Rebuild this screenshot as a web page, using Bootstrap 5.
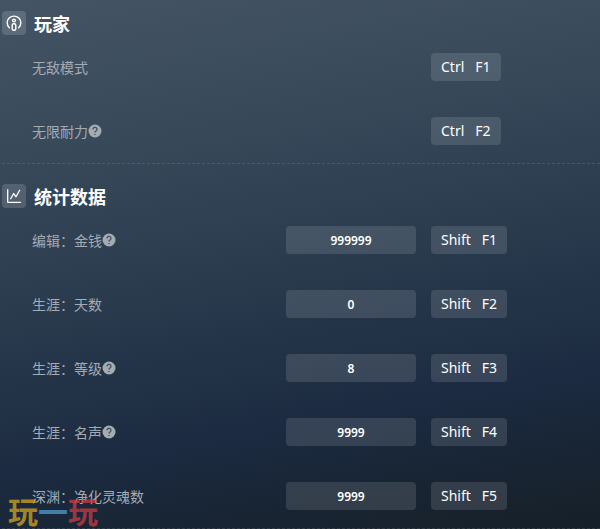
<!DOCTYPE html>
<html lang="zh-CN">
<head>
<meta charset="utf-8">
<meta name="viewport" content="width=device-width, initial-scale=1">
<title>玩家</title>
<link href="https://cdn.jsdelivr.net/npm/bootstrap@5.3.0/dist/css/bootstrap.min.css" rel="stylesheet">
<style>
html { min-height: 100%; background: linear-gradient(170deg, #445465 0%, #38495a 25%, #2a3b4e 50%, #1b2a40 76%, #17222d 94%, #151f28 100%); }
body { background: transparent; color: #fff; font-family: "Noto Sans", "Noto Sans CJK SC", sans-serif; overflow: hidden; }
.options { margin-left: 2px; padding-top: 20px; border-bottom: 1px dashed rgba(255,255,255,.12); }
.options:first-child { padding-top: 11px; }
.section-icon { width: 24px; height: 24px; border-radius: 4px; background: rgba(255,255,255,.15); }
.section-title { font: 700 18px/24px "Noto Sans CJK SC", sans-serif; }
.option { height: 64px; padding-left: 30px; }
.option-name { width: 254px; font: 400 14px/20px "Noto Sans CJK SC", sans-serif; color: #a3abb3; }
.option-value { width: 130px; margin-right: 15px; }
.value-box { height: 28px; padding: 0; border: 0; border-radius: 4px; background: rgba(255,255,255,.12); color: #fff; font-size: 12px; font-weight: 600; text-align: center; }
.value-box:focus { background: rgba(255,255,255,.18); color: #fff; }
.hotkey { height: 28px; padding: 0 10px; border: 0; border-radius: 4px; background: rgba(255,255,255,.12); color: #fff; font-size: 14px; line-height: 28px; gap: 11px; }
.hotkey:hover { background: rgba(255,255,255,.2); color: #fff; }
.watermark { left: 8px; bottom: 4px; font: 700 30px/30px "Noto Sans CJK SC", sans-serif; opacity: .75; pointer-events: none; }
.wm-gold { color: #d4a51c; } .wm-blue { color: #509bcf; } .wm-red { color: #ca3b40; }
</style>
<script src="https://cdn.jsdelivr.net/npm/bootstrap@5.3.0/dist/js/bootstrap.bundle.min.js" defer></script>
</head>
<body>
<svg class="d-none" xmlns="http://www.w3.org/2000/svg"><symbol id="help" viewBox="0 0 14 14"><circle cx="7" cy="7" r="6.5" fill="#a3abb3"/><path d="M5 5.400a2 2 0 1 1 3 1.600Q7 7.500 7 8.500M7 10v1.100" fill="none" stroke="#35475a" stroke-width="1.2"/></symbol></svg>
<main class="position-relative">
<section class="options">
  <div class="d-flex align-items-center gap-2">
    <span class="section-icon d-flex align-items-center justify-content-center"><svg width="16" height="16" viewBox="0 0 16 16" fill="none" stroke="#fff" stroke-width="1.4" stroke-linecap="round"><path d="M3.300 12.800A6.800 6.800 0 1 1 12.700 12.800"/><circle cx="8" cy="5.500" r="1.400"/><rect x="6.200" y="8.700" width="3.600" height="6.500" rx="1.500"/></svg></span>
    <h2 class="section-title m-0">玩家</h2>
  </div>
  <div class="option d-flex align-items-center"><span class="option-name">无敌模式</span><div class="option-value"></div><button type="button" class="hotkey btn d-flex"><span>Ctrl</span><span>F1</span></button></div>
  <div class="option d-flex align-items-center"><span class="option-name d-flex align-items-center">无限耐力<svg width="14" height="14" role="img" aria-label="帮助"><use href="#help"/></svg></span><div class="option-value"></div><button type="button" class="hotkey btn d-flex"><span>Ctrl</span><span>F2</span></button></div>
</section>
<section class="options">
  <div class="d-flex align-items-center gap-2">
    <span class="section-icon d-flex align-items-center justify-content-center"><svg width="16" height="16" viewBox="0 0 16 16" fill="none" stroke="#fff" stroke-width="1.3" stroke-linecap="round" stroke-linejoin="round"><path d="M1.700 1.700v12.600H14.500M4.700 10.800l3-5.300 2.300 3.300L13.700 2.200"/></svg></span>
    <h2 class="section-title m-0">统计数据</h2>
  </div>
  <div class="option d-flex align-items-center"><label for="gold" class="option-name d-flex align-items-center">编辑：金钱<svg width="14" height="14" role="img" aria-label="帮助"><use href="#help"/></svg></label><div class="option-value"><input id="gold" type="text" class="value-box form-control" value="999999"></div><button type="button" class="hotkey btn d-flex"><span>Shift</span><span>F1</span></button></div>
  <div class="option d-flex align-items-center"><label for="days" class="option-name">生涯：天数</label><div class="option-value"><input id="days" type="text" class="value-box form-control" value="0"></div><button type="button" class="hotkey btn d-flex"><span>Shift</span><span>F2</span></button></div>
  <div class="option d-flex align-items-center"><label for="level" class="option-name d-flex align-items-center">生涯：等级<svg width="14" height="14" role="img" aria-label="帮助"><use href="#help"/></svg></label><div class="option-value"><input id="level" type="text" class="value-box form-control" value="8"></div><button type="button" class="hotkey btn d-flex"><span>Shift</span><span>F3</span></button></div>
  <div class="option d-flex align-items-center"><label for="fame" class="option-name d-flex align-items-center">生涯：名声<svg width="14" height="14" role="img" aria-label="帮助"><use href="#help"/></svg></label><div class="option-value"><input id="fame" type="text" class="value-box form-control" value="9999"></div><button type="button" class="hotkey btn d-flex"><span>Shift</span><span>F4</span></button></div>
  <div class="option d-flex align-items-center"><label for="souls" class="option-name">深渊：净化灵魂数</label><div class="option-value"><input id="souls" type="text" class="value-box form-control" value="9999"></div><button type="button" class="hotkey btn d-flex"><span>Shift</span><span>F5</span></button></div>
</section>
<div class="watermark position-absolute"><span class="wm-gold">玩</span><span class="wm-blue">一</span><span class="wm-red">玩</span></div>
</main>
</body>
</html>
